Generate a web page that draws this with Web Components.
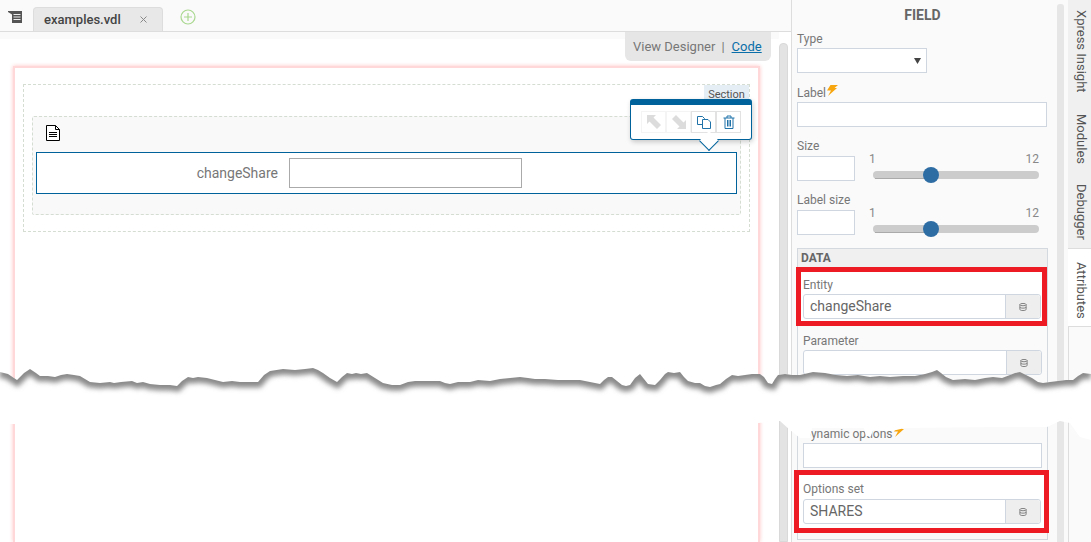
<!DOCTYPE html>
<html>
<head>
<meta charset="utf-8">
<title>examples.vdl</title>
<style>
  html, body { margin: 0; height: 100%; overflow: hidden; background: #fff; }
  body { font-family: Roboto, "Liberation Sans", sans-serif; }
</style>
</head>
<body>
<xp-app></xp-app>

<script>
const define = (name, html) => {
  customElements.define(name, class extends HTMLElement {
    constructor() {
      super();
      this.attachShadow({ mode: 'open' }).innerHTML = html;
    }
  });
};

const dbIcon = `<svg width="8" height="8" viewBox="0 0 8 9" fill="none" stroke="#777" stroke-width="1"><ellipse cx="4" cy="1.800" rx="3.500" ry="1.300"/><path d="M.5 1.800v5.400c0 .8 1.600 1.300 3.500 1.300s3.500-.5 3.500-1.300V1.800M.5 4.500c0 .8 1.600 1.300 3.500 1.300s3.500-.5 3.500-1.300"/></svg>`;
const bolt = `<svg width="11" height="11" viewBox="0 0 11 11"><path d="M3.500 0H11L7.500 3H10L1 11 4 5.500H0z" fill="#f7a60f"/></svg>`;

define('xp-tabbar', `
<style>
  :host { display: flex; align-items: flex-end; height: 31px; background: #fafafa; border-bottom: 1px solid #ddd; }
  .menu { width: 14px; height: 12px; margin: 0 11px 8px 8px; }
  .tab { display: flex; align-items: center; box-sizing: border-box; width: 130px; height: 24px; padding: 0 11px 0 10px; background: #e8e8e8; border: 1px solid #ddd; border-bottom: 0; border-radius: 4px 4px 0 0; font-size: 13px; font-weight: 500; color: #444; }
  .tab span { flex: 1; }
  .x { width: 7px; height: 7px; margin-right: 4px; }
  .plus { width: 16px; height: 16px; margin: 0 0 6px 17px; }
</style>
<svg class="menu" viewBox="0 0 14 12"><path d="M0 0h14v12H4V3.500L0 1z" fill="#555"/><path d="M5.500 3.500h7M5.500 6h7M5.500 8.500h7" stroke="#eee" stroke-width="1"/></svg>
<div class="tab"><span>examples.vdl</span>
  <svg class="x" viewBox="0 0 7 7" stroke="#888" stroke-width="1" fill="none"><path d="M.5.500l6 6M6.500.500l-6 6"/></svg>
</div>
<svg class="plus" viewBox="0 0 16 16" fill="none" stroke="#a9d88f" stroke-width="1.200"><circle cx="8" cy="8" r="7"/><path d="M8 4v8M4 8h8"/></svg>
`);

define('xp-toolbar', `
<style>
  :host { display: block; position: absolute; top: 14px; right: -3px; width: 122px; height: 41px; box-sizing: border-box; background: #fff; border: 1px solid #00629b; border-top: 6px solid #00629b; border-radius: 3px; box-shadow: 1px 2px 5px rgba(0,0,0,.2); z-index: 3; }
  .btns { display: flex; margin: 6px 0 0 10px; }
  .btn { display: flex; align-items: center; justify-content: center; width: 25px; height: 22px; box-sizing: border-box; border: 1px solid #f4f4f4; }
  .on { border-color: #e2e2e2; }
  .tip { position: absolute; left: 71px; top: 29px; width: 14px; height: 14px; box-sizing: border-box; background: #fff; border: solid #00629b; border-width: 0 1px 1px 0; transform: rotate(45deg); }
</style>
<div class="btns">
  <div class="btn"><svg width="14" height="14" viewBox="0 0 14 14"><path d="M0 0h9L6.500 2.500 14 10l-4 4-7.500-7.500L0 9z" fill="#dcdcdc"/></svg></div>
  <div class="btn"><svg width="14" height="14" viewBox="0 0 14 14"><path d="M14 14H5l2.500-2.500L0 4l4-4 7.500 7.500L14 5z" fill="#dcdcdc"/></svg></div>
  <div class="btn on"><svg width="14" height="14" viewBox="0 0 14 14" fill="#fff" stroke="#1f72a8" stroke-width="1"><path d="M.5 1.500h5l2 2v6h-7z"/><path d="M5.500 4.500h5.500l2.500 2.500v6.500h-8z"/></svg></div>
  <div class="btn on"><svg width="12" height="14" viewBox="0 0 12 14" fill="none" stroke="#1f72a8" stroke-width="1"><path d="M.5 3h11M4 3V1h4v2M2 3v10.500h8V3M4.500 5v6.500M6 5v6.500M7.500 5v6.500"/></svg></div>
</div>
<div class="tip"></div>
`);

define('xp-canvas', `
<style>
  :host { display: block; box-sizing: border-box; flex: 1; margin: 5px 19px 0 13px; padding: 16px 8px 0 8px; background: #fff; border: 2px solid #ffd9d9; border-bottom: 0; box-shadow: 0 0 4px #ffc4c4; }
  .section { position: relative; box-sizing: border-box; height: 148px; padding: 31px 8px 0; border: 1px dashed #d5ddd3; }
  .tag { position: absolute; top: 0; right: 0; width: 45px; height: 15px; background: #e6eef5; font-size: 11px; line-height: 19px; text-align: center; color: #555; overflow: hidden; }
  .inner { box-sizing: border-box; height: 99px; padding: 8px 3px 0; background: #f9f9f9; border: 1px dashed #d5ddd3; border-radius: 2px; }
  .doc { display: block; width: 14px; height: 16px; margin: 0 0 11px 10px; }
  .row { display: flex; align-items: center; box-sizing: border-box; height: 42px; background: #fff; border: 1px solid #00629b; }
  .name { width: 241px; text-align: right; font-size: 14px; color: #777; }
  .input { box-sizing: border-box; width: 233px; height: 30px; margin-left: 11px; border: 1px solid #aaa; }
</style>
<div class="section">
  <div class="tag">Section</div>
  <xp-toolbar></xp-toolbar>
  <div class="inner">
    <svg class="doc" viewBox="0 0 14 16" fill="#fff" stroke="#000" stroke-width="1"><path d="M.5.500h9l4 4v11H.5z"/><path d="M9.500.500v4h4M3 7.500h8M3 9.500h8M3 11.500h8" fill="none"/></svg>
    <div class="row"><div class="name">changeShare</div><div class="input"></div></div>
  </div>
</div>
`);

define('xp-designer', `
<style>
  :host { display: flex; flex: 1; min-height: 0; }
  .view { display: flex; flex-direction: column; flex: 1; min-width: 0; background: linear-gradient(#fafafa 7px, #fff 7px); }
  .switch { display: flex; align-items: center; align-self: flex-end; box-sizing: border-box; width: 146px; height: 29px; margin-right: 8px; padding: 0 0 0 8px; background: #e6e6e6; border-radius: 0 0 6px 6px; font-size: 13px; color: #777; }
  .sep { margin: 0 7px 0 6px; }
  a { color: #0a6ea8; text-decoration: underline; }
  .bar { width: 9px; margin: 11px 3px 0 0; background: #e3e3e3; border: 1px solid #d9d9d9; box-sizing: border-box; border-radius: 4px 4px 0 0; }
</style>
<div class="view">
  <div class="switch">View Designer<span class="sep">|</span><a href="#">Code</a></div>
  <xp-canvas></xp-canvas>
</div>
<div class="bar"></div>
`);

define('xp-field', `
<style>
  :host { display: block; margin-top: var(--gap, 0); }
  .lab { display: flex; align-items: center; box-sizing: border-box; height: 20px; padding-top: 1px; font-size: 12px; color: #777; }
</style>
<div class="lab"><slot name="label"></slot></div>
<slot></slot>
`);

define('xp-input', `
<style>
  :host { display: flex; align-items: center; justify-content: flex-end; box-sizing: border-box; width: var(--w, 100%); height: 25px; margin-top: var(--top, 0); padding-right: 5px; background: #fff; border: 1px solid #cfd6df; }
</style>
<slot></slot>
`);

define('xp-db-input', `
<style>
  :host { display: flex; box-sizing: border-box; height: 25px; background: #fff; border: 1px solid #cfd6df; border-radius: 3px; font-size: 14px; color: #666; }
  .v { flex: 1; padding-left: 6px; line-height: 23px; }
  .add { display: flex; align-items: center; justify-content: center; width: 34px; background: #eee; border-left: 1px solid #cfd6df; border-radius: 0 3px 3px 0; }
</style>
<div class="v"><slot></slot></div>
<div class="add">${dbIcon}</div>
`);

define('xp-slider', `
<style>
  :host { display: block; width: 174px; margin: -3px 0 0 14px; font-size: 12px; color: #888; }
  .nums { display: flex; justify-content: space-between; height: 14px; line-height: 14px; margin-right: 4px; }
  .track { position: relative; height: 8px; margin: 5px 4px 0 4px; background: #ccc; border-radius: 4px; }
  .track::before { content: ""; position: absolute; left: 2px; bottom: 0; width: 56px; height: 1px; background: #aaa; }
  .thumb { position: absolute; left: 50px; top: -4px; width: 16px; height: 16px; border-radius: 50%; background: #2e6da4; }
</style>
<div class="nums"><span>1</span><span>12</span></div>
<div class="track"><div class="thumb"></div></div>
`);

define('xp-mark', `
<style>
  :host { display: block; box-sizing: border-box; background: #fff; border: 5px solid #ed1c24; }
</style>
<slot></slot>
`);

define('xp-panel', `
<style>
  :host { display: flex; flex: none; box-sizing: border-box; width: 277px; height: 542px; padding-left: 5px; background: #fafafa; border-left: 1px solid #ddd; overflow: hidden; }
  .col { flex: none; width: 251px; }
  .sb { flex: none; width: 7px; margin: 4px 4px 0 9px; background: #e6e6e6; border-radius: 3px 3px 0 0; }
  h1 { height: 28px; margin: 0; font-size: 14px; font-weight: 700; line-height: 30px; text-align: center; color: #666; }
  .size { display: flex; }
  .data { box-sizing: border-box; width: 251px; height: 292px; margin-top: 13px; border: 1px solid #d4d9e0; }
  .head { box-sizing: border-box; height: 18px; padding-left: 3px; background: #f0f0f0; font-size: 12px; font-weight: 700; line-height: 19px; color: #666; }
  .m1 { margin: 0 0 0 -2px; padding: 2px 1px 2px 2px; }
  .m2 { margin: 2px -2px 0 -4px; padding: 3px 3px 4px 4px; }
  .m2 xp-db-input { margin-top: 1px; }
  .plain { margin: 4px 5px 0 5px; }
  .dyn { margin-top: 48px; }
</style>
<div class="col">
<h1>FIELD</h1>
<xp-field><span slot="label">Type</span>
  <xp-input style="--w:130px"><svg width="7" height="6" viewBox="0 0 7 6"><path d="M0 0h7L3.500 6z" fill="#444"/></svg></xp-input>
</xp-field>
<xp-field style="--gap:9px"><span slot="label">Label</span><span slot="label" style="margin:-5px 0 0 1px;line-height:0">${bolt}</span>
  <xp-input style="--w:250px"></xp-input>
</xp-field>
<xp-field style="--gap:8px"><span slot="label">Size</span>
  <div class="size"><xp-input style="--w:58px;--top:1px"></xp-input><xp-slider></xp-slider></div>
</xp-field>
<xp-field style="--gap:8px"><span slot="label">Label size</span>
  <div class="size"><xp-input style="--w:58px;--top:1px"></xp-input><xp-slider></xp-slider></div>
</xp-field>
<div class="data">
  <div class="head">DATA</div>
  <xp-mark class="m1"><xp-field><span slot="label">Entity</span><xp-db-input>changeShare</xp-db-input></xp-field></xp-mark>
  <xp-field class="plain"><span slot="label">Parameter</span><xp-db-input></xp-db-input></xp-field>
  <xp-field class="plain dyn"><span slot="label">Dynamic options</span><span slot="label" style="margin:-4px 0 0 1px;line-height:0">${bolt}</span><xp-input></xp-input></xp-field>
  <xp-mark class="m2"><xp-field><span slot="label">Options set</span><xp-db-input>SHARES</xp-db-input></xp-field></xp-mark>
</div>
</div>
<div class="sb"></div>
`);

define('xp-sidetabs', `
<style>
  :host { display: flex; flex-direction: column; flex: none; width: 23px; height: 542px; background: #f0f0f0; font-size: 13px; color: #555; }
  .t { box-sizing: border-box; width: 23px; padding-left: 3px; writing-mode: vertical-rl; line-height: 20px; flex: none; }
  .a { background: #fff; border-bottom: 1px solid #ddd; }
  .rest { flex: 1; background: #fafafa; border-left: 1px solid #ddd; }
</style>
<div class="t" style="height:114px;padding-top:10px">Xpress Insight</div>
<div class="t" style="height:70px">Modules</div>
<div class="t" style="height:65px;border-bottom:1px solid #ddd">Debugger</div>
<div class="t a" style="height:78px;padding-top:13px">Attributes</div>
<div class="rest"></div>
`);

// the white torn strip across the middle of the picture
const tearTop = [[0,372],[8,374],[17,380],[24,373],[30,369],[36,373],[40,376],[48,376],[55,377],[61,375],[67,374],[74,375],[80,376],[85,379],[90,382],[100,383],[110,382],[114,383],[121,382],[132,381],[137,383],[143,382],[150,384],[160,385],[170,385],[177,386],[182,381],[188,377],[193,378],[198,377],[207,378],[215,380],[223,382],[232,381],[240,382],[253,382],[258,382],[264,375],[270,371],[283,369],[295,370],[305,369],[313,368],[318,370],[323,373],[330,378],[337,382],[342,377],[347,373],[352,374],[356,373],[361,374],[367,373],[375,378],[383,383],[392,385],[400,385],[408,382],[415,381],[428,381],[440,381],[445,383],[450,384],[458,382],[470,382],[478,380],[490,381],[500,379],[510,378],[520,377],[528,378],[535,379],[545,379],[558,380],[570,380],[580,380],[590,382],[600,384],[604,380],[608,377],[612,377],[617,381],[622,385],[626,386],[630,385],[635,378],[640,374],[644,379],[648,384],[655,385],[660,380],[665,374],[668,372],[674,373],[680,372],[684,377],[688,381],[695,383],[700,383],[705,386],[710,387],[716,385],[720,384],[726,379],[732,375],[738,376],[745,375],[752,374],[760,374],[764,377],[768,383],[772,384],[775,379],[778,375],[785,374],[792,375],[800,375],[813,372],[825,373],[836,375],[847,376],[858,375],[870,377],[880,376],[890,377],[903,376],[915,376],[925,374],[932,372],[937,370],[941,373],[946,377],[953,380],[965,379],[975,380],[985,378],[993,377],[1002,378],[1010,375],[1015,373],[1020,372],[1026,375],[1032,378],[1038,382],[1043,383],[1050,382],[1058,381],[1066,380],[1073,380],[1078,376],[1083,373],[1091,374]];
const tearBottom = [[1091,440],[1080,437],[1070,423],[1060,421],[1047,427],[1000,427],[905,428],[892,431],[873,430],[871,436],[866,436],[864,428],[812,428],[810,438],[800,438],[790,430],[780,421],[758,423],[500,424],[200,424],[0,424]];
const pts = a => a.map(p => p.join(',')).join(' ');

define('xp-tear', `
<style>
  :host { display: block; position: absolute; left: 0; top: 0; pointer-events: none; z-index: 5; }
  svg { display: block; }
</style>
<svg width="1091" height="542" viewBox="0 0 1091 542">
  <defs>
    <clipPath id="strip"><polygon points="${pts(tearTop.concat(tearBottom))}"/></clipPath>
    <filter id="soft" x="-5%" y="-100%" width="110%" height="300%"><feGaussianBlur stdDeviation="2.800"/></filter>
  </defs>
  <polygon points="${pts(tearTop.concat(tearBottom))}" fill="#fff"/>
  <g clip-path="url(#strip)"><polyline points="${pts(tearTop)}" fill="none" stroke="#8a8a8a" stroke-width="11" filter="url(#soft)"/></g>
</svg>
`);

define('xp-app', `
<style>
  :host { display: flex; position: relative; width: 1091px; height: 542px; overflow: hidden; font-family: Roboto, "Liberation Sans", sans-serif; }
  .left { display: flex; flex-direction: column; flex: none; width: 791px; height: 542px; }
</style>
<div class="left">
  <xp-tabbar></xp-tabbar>
  <xp-designer></xp-designer>
</div>
<xp-panel></xp-panel>
<xp-sidetabs></xp-sidetabs>
<xp-tear></xp-tear>
`);
</script>
</body>
</html>
